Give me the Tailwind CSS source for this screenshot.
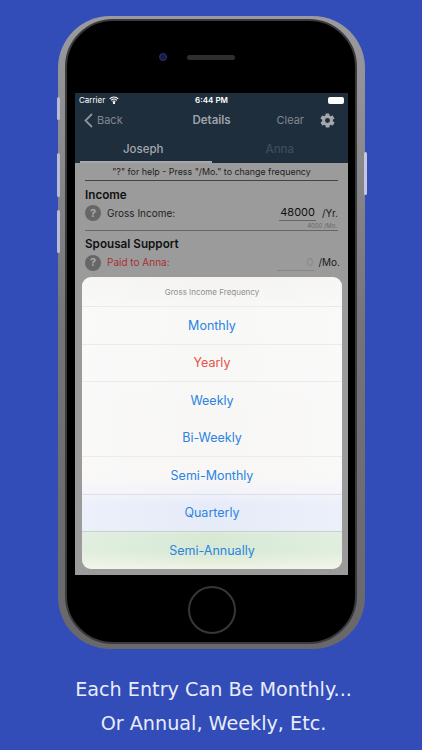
<!DOCTYPE html>
<html lang="en">
<head>
  <meta charset="UTF-8">
  <title>Details</title>
  <script src="https://cdn.jsdelivr.net/npm/@tailwindcss/browser@4"></script>
</head>
<body class="w-[422px] h-[750px] overflow-hidden bg-[#324cb8] font-['Inter','Liberation_Sans',sans-serif]">
  <div class="pt-[16px] pl-[58px]">
    <!-- phone -->
    <div class="relative w-[307px] h-[633px] rounded-[52px] bg-gradient-to-b from-[#9a9a9f] via-[#737378] to-[#68686b] pl-[7px] pr-[8px] pt-[3px] pb-[5px]">
      <!-- side buttons -->
      <div class="absolute left-[-1px] top-[81px] w-[3px] h-[23px] rounded-full bg-[#b9bcd2]"></div>
      <div class="absolute left-[-1px] top-[137px] w-[3px] h-[44px] rounded-full bg-[#b9bcd2]"></div>
      <div class="absolute left-[-1px] top-[194px] w-[3px] h-[43px] rounded-full bg-[#b9bcd2]"></div>
      <div class="absolute right-[-2px] top-[136px] w-[3px] h-[43px] rounded-full bg-[#c5c8da]"></div>

      <div class="w-full h-full rounded-[48px] bg-black border-[2px] border-[#3a3a3d] flex flex-col pl-[8px]">
        <!-- top bezel -->
        <div class="relative h-[72px] w-[273px] shrink-0">
          <div class="absolute left-[84px] top-[32px] w-[8px] h-[8px] rounded-full bg-[#161c40] border border-[#26347a]"></div>
          <div class="absolute left-[112px] top-[34px] w-[48px] h-[5px] rounded-full bg-[#2e2e30]"></div>
        </div>

        <!-- screen -->
        <div class="relative w-[273px] h-[482px] shrink-0 bg-gradient-to-b from-[#aeaeae] to-[#9b9b9b] to-[15%] overflow-hidden">
          <div class="bg-[#1f2e3c]">
            <div class="relative h-[14px] flex items-center justify-between px-[4px] text-white">
              <div class="flex items-center gap-[4px] text-[8px]">
                <span>Carrier</span>
                <svg width="10" height="8" viewBox="0 0 10 8" fill="none" stroke="#fff" stroke-width="1.1"><path d="M.7 2.8a6.2 6.2 0 0 1 8.6 0M2.2 4.3a4 4 0 0 1 5.6 0M3.6 5.7a2 2 0 0 1 2.8 0"/><circle cx="5" cy="7" r=".6" fill="#fff"/></svg>
              </div>
              <span class="absolute left-0 right-0 text-center text-[8px] font-semibold">6:44 PM</span>
              <div class="w-[16px] h-[7px] rounded-[2px] bg-white"></div>
            </div>
            <div class="relative h-[26px] flex items-center justify-between pl-[9px] pr-[12px]">
              <div class="flex items-center gap-[4px] text-[#7f8890] text-[11px]">
                <svg width="9" height="15" viewBox="0 0 9 15" fill="none" stroke="#8b939a" stroke-width="1.8"><path d="M8 1 1.5 7.5 8 14"/></svg>
                <span>Back</span>
              </div>
              <span class="absolute left-0 right-0 top-[5px] text-center text-[11.5px] font-semibold text-[#9ea4a9]">Details</span>
              <div class="flex items-center gap-[15px] text-[#7f8890] text-[11px]">
                <span>Clear</span>
                <svg width="17" height="17" viewBox="0 0 24 24" fill="#a3a8ad"><path d="M19.4 13c.1-.3.1-.7.1-1s0-.7-.1-1l2.1-1.6c.2-.2.2-.4.1-.6l-2-3.5c-.1-.2-.4-.3-.6-.2l-2.5 1c-.5-.4-1.1-.7-1.7-1l-.4-2.7c0-.2-.2-.4-.5-.4h-4c-.2 0-.4.2-.5.4l-.4 2.7c-.6.3-1.2.6-1.7 1l-2.5-1c-.2-.1-.5 0-.6.2l-2 3.5c-.1.2-.1.5.1.6L4.6 11c-.1.3-.1.7-.1 1s0 .7.1 1l-2.1 1.6c-.2.2-.2.4-.1.6l2 3.5c.1.2.4.3.6.2l2.5-1c.5.4 1.1.7 1.7 1l.4 2.7c0 .2.2.4.5.4h4c.2 0 .4-.2.5-.4l.4-2.7c.6-.3 1.2-.6 1.7-1l2.5 1c.2.1.5 0 .6-.2l2-3.5c.1-.2.1-.5-.1-.6L19.4 13zM12 15.5a3.5 3.5 0 1 1 0-7 3.5 3.5 0 0 1 0 7z"/></svg>
              </div>
            </div>
            <div class="flex h-[30px] pt-[4px] text-[11.5px] font-medium">
              <div class="flex-1 flex items-center justify-center text-[#a3a8ad]">Joseph</div>
              <div class="flex-1 flex items-center justify-center text-[#3f4d5a]">Anna</div>
            </div>
          </div>
          <div class="ml-[5px] h-[2px] -mt-[2px] w-[132px] bg-[#a8a8a8]"></div>

          <!-- form behind the sheet -->
          <div class="px-[10px] text-[#1a1a1a]">
            <div class="h-[18px] border-b border-[#444] flex items-center justify-center text-[8.9px] text-[#222]">"?" for help - Press "/Mo." to change frequency</div>
            <div class="mt-[6px] text-[11.7px] font-semibold leading-[16px] text-[#111]">Income</div>
            <div class="flex items-center h-[19px] pt-[1px]">
              <div class="w-[16px] h-[16px] rounded-full bg-[#666] text-[#aaa] text-[11px] font-bold flex items-center justify-center">?</div>
              <span class="ml-[6px] text-[10px] text-[#222]">Gross Income:</span>
              <span class="ml-auto w-[37px] border-b border-[#666] text-right pr-[1px] text-[11px] leading-[15px] text-[#111]">48000</span>
              <span class="ml-[6px] text-[10px]">/Yr.</span>
            </div>
            <div class="h-[9px] border-b border-[#666] text-right pr-[1px] text-[6px] leading-[8px] text-[#666]">4000 /Mo.</div>
            <div class="mt-[5px] text-[11.7px] font-semibold leading-[16px] text-[#111]">Spousal Support</div>
            <div class="flex items-center h-[19px] mt-[1px]">
              <div class="w-[16px] h-[16px] rounded-full bg-[#666] text-[#aaa] text-[11px] font-bold flex items-center justify-center">?</div>
              <span class="ml-[6px] text-[10px] text-[#a83030]">Paid to Anna:</span>
              <span class="ml-auto w-[37px] border-b border-[#888] text-right pr-[1px] text-[11px] leading-[15px] text-[#888]">0</span>
              <span class="ml-[4px] mr-[-2px] text-[10px]">/Mo.</span>
            </div>
          </div>

          <!-- action sheet -->
          <div class="absolute left-[7px] top-[184px] w-[260px] h-[292px] rounded-[9px] overflow-hidden bg-[linear-gradient(to_bottom,#f4f3f1_0%,#f8f8f7_12%,#f8f7f6_68%,#f3f3f9_73%,#e6ebf9_78%,#e6ebf8_86.5%,#d8e9d6_88%,#d6e9d4_94%,#f1f2e4_100%)] flex flex-col text-[12.5px] text-[#2a84e0]">
            <div class="absolute inset-0 bg-gradient-to-r from-white/25 via-transparent to-white/25"></div>
            <div class="relative h-[29px] shrink-0 flex items-center justify-center text-[8px] text-[#8f8f8f]">Gross Income Frequency</div>
            <div class="relative h-[37.5px] shrink-0 pt-[2px] border-t border-[#ebebea] flex items-center justify-center">Monthly</div>
            <div class="relative h-[37.5px] shrink-0 pt-[2px] border-t border-[#ebebea] flex items-center justify-center text-[#e8504a]">Yearly</div>
            <div class="relative h-[37.5px] shrink-0 pt-[2px] border-t border-[#ebebea] flex items-center justify-center">Weekly</div>
            <div class="relative h-[37.5px] shrink-0 pt-[2px] flex items-center justify-center">Bi-Weekly</div>
            <div class="relative h-[37.5px] shrink-0 pt-[2px] border-t border-[#ebebea] flex items-center justify-center">Semi-Monthly</div>
            <div class="relative h-[37.5px] shrink-0 pt-[2px] border-t border-[#dcdfea] flex items-center justify-center">Quarterly</div>
            <div class="relative h-[37.5px] shrink-0 pt-[2px] border-t border-[#c5d4c8] flex items-center justify-center">Semi-Annually</div>
          </div>
        </div>

        <!-- home button -->
        <div class="flex-1 w-[273px] flex items-center justify-center">
          <div class="w-[48px] h-[48px] rounded-full border-[2px] border-[#37373a] mt-[2px]"></div>
        </div>
      </div>
    </div>
  </div>

  <!-- caption -->
  <div class="mt-[24px] pl-[5px] text-center text-[19.2px] leading-[34px] text-[#e8ecfa] font-['DejaVu_Sans',sans-serif]">
    <p>Each Entry Can Be Monthly...</p>
    <p>Or Annual, Weekly, Etc.</p>
  </div>
</body>
</html>
